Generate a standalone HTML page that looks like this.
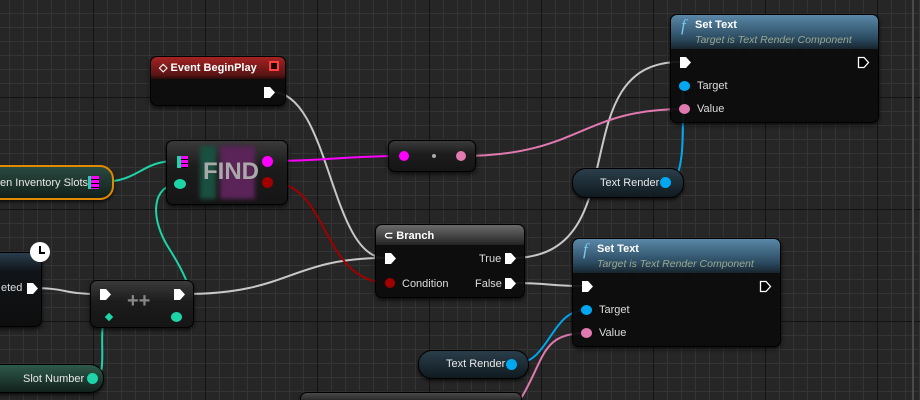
<!DOCTYPE html><html><head><style>
*{margin:0;padding:0;box-sizing:border-box}
html,body{width:920px;height:400px;overflow:hidden}
body{background:#262626;font-family:"Liberation Sans",sans-serif;position:relative}
.grid{position:absolute;inset:0;
background-image:
linear-gradient(to right,#141414 0,#141414 1px,transparent 1px),
linear-gradient(to bottom,#141414 0,#141414 1px,transparent 1px),
linear-gradient(to right,#343434 0,#343434 1px,transparent 1px),
linear-gradient(to bottom,#343434 0,#343434 1px,transparent 1px);
background-size:112px 112px,112px 112px,14px 14px,14px 14px;
background-position:93px 0,0 97px,9px 0,0 13px}
.node{position:absolute;background:rgba(12,12,12,.93);border-radius:7px;box-shadow:0 2px 4px rgba(0,0,0,.7);border:1px solid #000;color:#ddd;font-size:11px}
.hdr{position:absolute;left:0;right:0;top:0;border-radius:6px 6px 0 0;color:#fff;font-weight:bold;font-size:11px}
.pill{position:absolute;border-radius:14px;border:1px solid #000;box-shadow:0 2px 3px rgba(0,0,0,.7);color:#e8e8e8;font-size:11px}
.t{position:absolute;white-space:nowrap}
svg{position:absolute;left:0;top:0}
</style></head><body>
<div class="grid"></div>
<div style="position:absolute;left:912px;top:0;width:2px;height:400px;background:#4a4a4a"></div>
<svg width="920" height="400" fill="none" stroke-width="2">
<path d="M272,92 C330,92 330,258 385,258" stroke="#c8c8c8"/>
<path d="M185,294 C290,294 290,258 385,258" stroke="#c8c8c8"/>
<path d="M30,288 C70,288 60,294 100,294" stroke="#c8c8c8"/>
<path d="M512,258 C640,258 560,62 680,62" stroke="#c8c8c8"/>
<path d="M512,283 C550,283 550,286 582,286" stroke="#c8c8c8"/>
<path d="M270,161 C330,161 340,156 400,156" stroke="#f0f"/>
<path d="M461,156 C580,156 580,109 684,109" stroke="#e07ab0"/>
<path d="M586,333 C540,333 545,360 520,400" stroke="#e07ab0"/>
<path d="M270,182 C330,182 320,283 389,283" stroke="#a00000"/>
<path d="M100,182 C140,182 140,161 176,161" stroke="#1dd3a7"/>
<path d="M180,184 C150,184 150,220 170,250 C195,290 200,316 176,316" stroke="#1dd3a7"/>
<path d="M95,378 C110,378 95,320 108,317" stroke="#1dd3a7"/>
<path d="M669,182 C690,182 680,86 684,86" stroke="#00a8f0"/>
<path d="M514,364 C550,364 550,310 586,310" stroke="#00a8f0"/>
</svg>

<div class="node" style="left:150px;top:56px;width:136px;height:50px">
<div class="hdr" style="height:22px;background:linear-gradient(#a52323,#5a1414 80%,#2a0a0a)"><span class="t" style="left:8px;top:4px">◇ Event BeginPlay</span>
<div style="position:absolute;right:6px;top:4px;width:10px;height:10px;border:2px solid #ff4040;background:#200"></div></div>
<svg style="left:112px;top:29px" width="14" height="14"><path d="M1,1H7L12,6.5L7,12H1Z" fill="#fff"/></svg>
</div>

<div class="node" style="left:166px;top:140px;width:122px;height:65px;background:linear-gradient(#3a3a3a,#1c1c1c 40%,#151515)">
<div style="position:absolute;left:33px;top:5px;width:16px;height:53px;background:#1a5040;filter:blur(2px)"></div>
<div style="position:absolute;left:53px;top:5px;width:35px;height:53px;background:#5a2458;filter:blur(2px)"></div>
<span class="t" style="left:36px;top:17px;font-size:24px;font-weight:bold;color:#aaa">FIND</span>
<div style="position:absolute;left:10px;top:15px;width:4px;height:12px;background:#1dd3a7"></div>
<div style="position:absolute;left:14px;top:15px;width:7px;height:12px;background:repeating-linear-gradient(#f0f 0 3px,#000 3px 4px)"></div>
<div style="position:absolute;left:7px;top:38px;width:12px;height:10px;border-radius:50%;background:#1dd3a7"></div>
<div style="position:absolute;left:95px;top:15px;width:11px;height:11px;border-radius:50%;background:#f0f"></div>
<div style="position:absolute;left:95px;top:36px;width:11px;height:11px;border-radius:50%;background:#a00000"></div>
</div>

<div class="pill" style="left:-20px;top:165px;width:134px;height:35px;border:2px solid #e08a00;background:linear-gradient(#2a4a40,#12201c)">
<span class="t" style="left:18px;top:10px;font-size:11px">en Inventory Slots</span>
<div style="position:absolute;left:106px;top:9px;width:3px;height:13px;background:#1dd3a7"></div>
<div style="position:absolute;left:109px;top:9px;width:8px;height:13px;background:repeating-linear-gradient(#f0f 0 3px,#000 3px 4px)"></div>
</div>

<div class="node" style="left:388px;top:140px;width:88px;height:32px;background:linear-gradient(#3a3a3a,#1c1c1c 45%,#151515)">
<div style="position:absolute;left:10px;top:10px;width:10px;height:10px;border-radius:50%;background:#f0f"></div>
<div style="position:absolute;left:43px;top:13px;width:4px;height:4px;border-radius:50%;background:#aaa"></div>
<div style="position:absolute;left:67px;top:10px;width:10px;height:10px;border-radius:50%;background:#e07ab0"></div>
</div>

<div class="node" style="left:670px;top:14px;width:209px;height:109px">
<div class="hdr" style="height:34px;background:linear-gradient(#5a88a8,#2a4a60 70%,#18252e)">
<span class="t" style="left:10px;top:1px;font-family:'Liberation Serif',serif;font-style:italic;font-size:17px;color:#7ac8f0;font-weight:normal">f</span>
<span class="t" style="left:24px;top:4px">Set Text</span>
<span class="t" style="left:24px;top:19px;font-weight:normal;font-style:italic;font-size:10.5px;color:#9aa890">Target is Text Render Component</span></div>
<svg style="left:8px;top:41px" width="14" height="14"><path d="M1,1H7L12,6.5L7,12H1Z" fill="#fff"/></svg>
<svg style="left:186px;top:41px" width="14" height="14"><path d="M1.5,1.5H7L11.5,6.5L7,11.5H1.5Z" stroke="#fff" stroke-width="1.3"/></svg>
<div style="position:absolute;left:8px;top:66px;width:11px;height:10px;border-radius:50%;background:#00a8f0"></div>
<span class="t" style="left:26px;top:65px">Target</span>
<div style="position:absolute;left:8px;top:89px;width:11px;height:10px;border-radius:50%;background:#e07ab0"></div>
<span class="t" style="left:26px;top:88px">Value</span>
</div>

<div class="pill" style="left:572px;top:168px;width:112px;height:30px;background:linear-gradient(#2a3e4a,#101a20)">
<span class="t" style="left:27px;top:8px">Text Render</span>
<div style="position:absolute;left:87px;top:8px;width:11px;height:11px;border-radius:50%;background:#00a8f0"></div>
</div>

<div class="node" style="left:375px;top:224px;width:150px;height:74px">
<div class="hdr" style="height:20px;background:linear-gradient(#6a6a6a,#3a3a3a 70%,#222)"><span class="t" style="left:8px;top:4px">⊂ Branch</span></div>
<svg style="left:8px;top:27px" width="14" height="14"><path d="M1,1H7L12,6.5L7,12H1Z" fill="#fff"/></svg>
<span class="t" style="left:103px;top:28px">True</span>
<svg style="left:128px;top:27px" width="14" height="14"><path d="M1,1H7L12,6.5L7,12H1Z" fill="#fff"/></svg>
<div style="position:absolute;left:9px;top:53px;width:10px;height:10px;border-radius:50%;background:#a00000"></div>
<span class="t" style="left:26px;top:53px">Condition</span>
<span class="t" style="left:99px;top:53px">False</span>
<svg style="left:128px;top:52px" width="14" height="14"><path d="M1,1H7L12,6.5L7,12H1Z" fill="#fff"/></svg>
</div>

<div class="node" style="left:572px;top:238px;width:209px;height:109px">
<div class="hdr" style="height:34px;background:linear-gradient(#5a88a8,#2a4a60 70%,#18252e)">
<span class="t" style="left:10px;top:1px;font-family:'Liberation Serif',serif;font-style:italic;font-size:17px;color:#7ac8f0;font-weight:normal">f</span>
<span class="t" style="left:24px;top:4px">Set Text</span>
<span class="t" style="left:24px;top:19px;font-weight:normal;font-style:italic;font-size:10.5px;color:#9aa890">Target is Text Render Component</span></div>
<svg style="left:8px;top:41px" width="14" height="14"><path d="M1,1H7L12,6.5L7,12H1Z" fill="#fff"/></svg>
<svg style="left:186px;top:41px" width="14" height="14"><path d="M1.5,1.5H7L11.5,6.5L7,11.5H1.5Z" stroke="#fff" stroke-width="1.3"/></svg>
<div style="position:absolute;left:8px;top:66px;width:11px;height:10px;border-radius:50%;background:#00a8f0"></div>
<span class="t" style="left:26px;top:65px">Target</span>
<div style="position:absolute;left:8px;top:89px;width:11px;height:10px;border-radius:50%;background:#e07ab0"></div>
<span class="t" style="left:26px;top:88px">Value</span>
</div>

<div class="pill" style="left:418px;top:350px;width:111px;height:29px;background:linear-gradient(#2a3e4a,#101a20)">
<span class="t" style="left:27px;top:7px">Text Render</span>
<div style="position:absolute;left:87px;top:8px;width:11px;height:11px;border-radius:50%;background:#00a8f0"></div>
</div>

<div class="node" style="left:300px;top:392px;width:222px;height:8px;border-radius:7px 7px 0 0;border-bottom:none;background:linear-gradient(#4a4a4a,#2a2a2a)"></div>

<div class="node" style="left:90px;top:280px;width:104px;height:48px;background:linear-gradient(#3a3a3a,#1c1c1c 45%,#151515)">
<svg style="left:8px;top:7px" width="14" height="14"><path d="M1,1H7L12,6.5L7,12H1Z" fill="#fff"/></svg>
<svg style="left:82px;top:7px" width="14" height="14"><path d="M1,1H7L12,6.5L7,12H1Z" fill="#fff"/></svg>
<span class="t" style="left:36px;top:9px;font-size:20px;font-weight:bold;color:#888">++</span>
<div style="position:absolute;left:15px;top:33px;width:6px;height:6px;background:#1dd3a7;transform:rotate(45deg)"></div>
<div style="position:absolute;left:80px;top:31px;width:11px;height:10px;border-radius:50%;background:#1dd3a7"></div>
</div>

<div class="node" style="left:-10px;top:252px;width:52px;height:75px;background:linear-gradient(#2a3e4e,#101418 25%,#0e0e0e)">
<span class="t" style="left:10px;top:29px">eted</span>
<svg style="left:35px;top:29px" width="14" height="14"><path d="M1,1H7L12,6.5L7,12H1Z" fill="#fff"/></svg>
</div>
<div style="position:absolute;left:30px;top:242px;width:20px;height:20px;border-radius:50%;background:#fff">
<div style="position:absolute;left:9px;top:4px;width:2px;height:7px;background:#000"></div>
<div style="position:absolute;left:9px;top:10px;width:6px;height:2px;background:#000"></div></div>

<div class="pill" style="left:-14px;top:364px;width:118px;height:29px;background:linear-gradient(#2e5a4a,#12201c)">
<span class="t" style="left:36px;top:8px">Slot Number</span>
<div style="position:absolute;left:100px;top:8px;width:11px;height:11px;border-radius:50%;background:#1dd3a7"></div>
</div>
</body></html>
